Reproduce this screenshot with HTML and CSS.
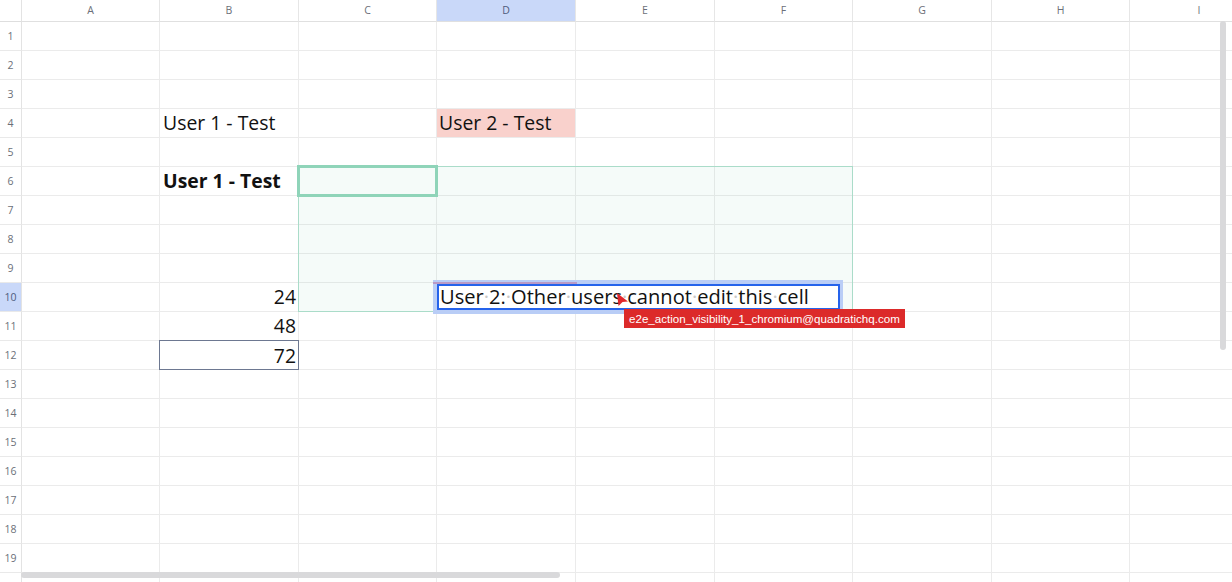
FILE: index.html
```html
<!DOCTYPE html>
<html>
<head>
<meta charset="utf-8">
<link rel="stylesheet" href="styles.css">
</head>
<body>
<div class="sheet">
  <div class="grid">
    <div class="corner"></div>
    <div class="ch">A</div><div class="ch">B</div><div class="ch">C</div><div class="ch sel">D</div><div class="ch">E</div><div class="ch">F</div><div class="ch">G</div><div class="ch">H</div><div class="ch">I</div>

    <div class="rh">1</div><div class="c"></div><div class="c"></div><div class="c"></div><div class="c"></div><div class="c"></div><div class="c"></div><div class="c"></div><div class="c"></div><div class="c"></div>
    <div class="rh">2</div><div class="c"></div><div class="c"></div><div class="c"></div><div class="c"></div><div class="c"></div><div class="c"></div><div class="c"></div><div class="c"></div><div class="c"></div>
    <div class="rh">3</div><div class="c"></div><div class="c"></div><div class="c"></div><div class="c"></div><div class="c"></div><div class="c"></div><div class="c"></div><div class="c"></div><div class="c"></div>
    <div class="rh">4</div><div class="c"></div><div class="c">User 1 - Test</div><div class="c"></div><div class="c pink">User 2 - Test</div><div class="c"></div><div class="c"></div><div class="c"></div><div class="c"></div><div class="c"></div>
    <div class="rh">5</div><div class="c"></div><div class="c"></div><div class="c"></div><div class="c"></div><div class="c"></div><div class="c"></div><div class="c"></div><div class="c"></div><div class="c"></div>
    <div class="rh">6</div><div class="c"></div><div class="c bold">User 1 - Test</div><div class="c"></div><div class="c"></div><div class="c"></div><div class="c"></div><div class="c"></div><div class="c"></div><div class="c"></div>
    <div class="rh">7</div><div class="c"></div><div class="c"></div><div class="c"></div><div class="c"></div><div class="c"></div><div class="c"></div><div class="c"></div><div class="c"></div><div class="c"></div>
    <div class="rh">8</div><div class="c"></div><div class="c"></div><div class="c"></div><div class="c"></div><div class="c"></div><div class="c"></div><div class="c"></div><div class="c"></div><div class="c"></div>
    <div class="rh">9</div><div class="c"></div><div class="c"></div><div class="c"></div><div class="c"></div><div class="c"></div><div class="c"></div><div class="c"></div><div class="c"></div><div class="c"></div>
    <div class="rh sel">10</div><div class="c"></div><div class="c num">24</div><div class="c"></div><div class="c"></div><div class="c"></div><div class="c"></div><div class="c"></div><div class="c"></div><div class="c"></div>
    <div class="rh">11</div><div class="c"></div><div class="c num">48</div><div class="c"></div><div class="c"></div><div class="c"></div><div class="c"></div><div class="c"></div><div class="c"></div><div class="c"></div>
    <div class="rh">12</div><div class="c"></div><div class="c num boxed">72</div><div class="c"></div><div class="c"></div><div class="c"></div><div class="c"></div><div class="c"></div><div class="c"></div><div class="c"></div>
    <div class="rh">13</div><div class="c"></div><div class="c"></div><div class="c"></div><div class="c"></div><div class="c"></div><div class="c"></div><div class="c"></div><div class="c"></div><div class="c"></div>
    <div class="rh">14</div><div class="c"></div><div class="c"></div><div class="c"></div><div class="c"></div><div class="c"></div><div class="c"></div><div class="c"></div><div class="c"></div><div class="c"></div>
    <div class="rh">15</div><div class="c"></div><div class="c"></div><div class="c"></div><div class="c"></div><div class="c"></div><div class="c"></div><div class="c"></div><div class="c"></div><div class="c"></div>
    <div class="rh">16</div><div class="c"></div><div class="c"></div><div class="c"></div><div class="c"></div><div class="c"></div><div class="c"></div><div class="c"></div><div class="c"></div><div class="c"></div>
    <div class="rh">17</div><div class="c"></div><div class="c"></div><div class="c"></div><div class="c"></div><div class="c"></div><div class="c"></div><div class="c"></div><div class="c"></div><div class="c"></div>
    <div class="rh">18</div><div class="c"></div><div class="c"></div><div class="c"></div><div class="c"></div><div class="c"></div><div class="c"></div><div class="c"></div><div class="c"></div><div class="c"></div>
    <div class="rh">19</div><div class="c"></div><div class="c"></div><div class="c"></div><div class="c"></div><div class="c"></div><div class="c"></div><div class="c"></div><div class="c"></div><div class="c"></div>
    <div class="rh"></div><div class="c"></div><div class="c"></div><div class="c"></div><div class="c"></div><div class="c"></div><div class="c"></div><div class="c"></div><div class="c"></div><div class="c"></div>
  </div>

  <div class="range"></div>
  <div class="cursor-green"></div>

  <div class="editor-halo"></div>
  <div class="peer-line"></div>
  <div class="editor">User<span class="ws">·</span>2:<span class="ws">·</span>Other<span class="ws">·</span>users<span class="ws">·</span>cannot<span class="ws">·</span>edit<span class="ws">·</span>this<span class="ws">·</span>cell</div>

  <svg class="pointer" width="13" height="15" viewBox="0 0 13 15"><path d="M1 1 L12 9.5 L6.5 10 L2.5 14 Z" fill="#e0262b"/></svg>
  <div class="tag">e2e_action_visibility_1_chromium@quadratichq.com</div>

  <div class="vscroll"></div>
  <div class="hscroll"></div>
</div>
</body>
</html>
```

FILE: styles.css
```css
html, body {
  margin: 0;
  padding: 0;
  background: #ffffff;
}

.sheet {
  position: relative;
  width: 1232px;
  height: 582px;
  overflow: hidden;
  background: #ffffff;
}

.grid {
  display: grid;
  grid-template-columns: 22px 138px 139px 138px 139px 139px 138px 139px 138px 139px;
  grid-template-rows: 22px repeat(20, 29px);
  font-family: "Open Sans", sans-serif;
}

.corner {
  box-sizing: border-box;
  border-right: 1px solid #e3e3e3;
  border-bottom: 1px solid #dedede;
}

.ch {
  box-sizing: border-box;
  border-right: 1px solid #e6e6e6;
  border-bottom: 1px solid #e0e0e0;
  font-size: 10.5px;
  color: #6b6f78;
  text-align: center;
  line-height: 21px;
}

.ch.sel {
  background: #c9d8f9;
  color: #4f5c7c;
}

.rh {
  box-sizing: border-box;
  border-right: 1px solid #e3e3e3;
  border-bottom: 1px solid #e9e9e9;
  font-size: 10.5px;
  color: #6b6f78;
  text-align: center;
  line-height: 28px;
}

.rh.sel {
  background: #c9d8f9;
  color: #4f5c7c;
}

.c {
  box-sizing: border-box;
  border-right: 1px solid #ebebeb;
  border-bottom: 1px solid #ebebeb;
  font-size: 19.4px;
  line-height: 27px;
  color: #111111;
  padding: 0 2px 0 3px;
  white-space: nowrap;
  overflow: visible;
}

.c.pink {
  background: #f9d1cc;
  padding-left: 2px;
}

.c.bold {
  font-weight: 700;
}

.c.num {
  text-align: right;
}

.c.boxed {
  border: 1px solid #6d7891;
  margin: -1px 0 0 -1px;
  width: calc(100% + 1px);
  height: 30px;
  line-height: 29px;
}

.range {
  position: absolute;
  left: 298px;
  top: 166px;
  width: 555px;
  height: 146px;
  box-sizing: border-box;
  border: 1px solid #aadcc9;
  background: rgba(120, 200, 170, 0.07);
}

.cursor-green {
  position: absolute;
  left: 297px;
  top: 165px;
  width: 141px;
  height: 32px;
  box-sizing: border-box;
  border: 3px solid #8fd4b9;
}

.editor-halo {
  position: absolute;
  left: 433px;
  top: 280px;
  width: 410px;
  height: 34px;
  background: #b9cdf6;
}

.peer-line {
  position: absolute;
  left: 433px;
  top: 282px;
  width: 144px;
  height: 2px;
  background: #b99ac6;
}

.editor {
  position: absolute;
  left: 437px;
  top: 284px;
  width: 403px;
  height: 26px;
  box-sizing: border-box;
  border: 2px solid #2563eb;
  background: #ffffff;
  font-family: "Open Sans", sans-serif;
  font-size: 20.1px;
  line-height: 22px;
  color: #111111;
  padding-left: 1px;
  white-space: nowrap;
  overflow: hidden;
}

.ws {
  color: #c9c9c9;
}

.pointer {
  position: absolute;
  left: 616px;
  top: 292px;
}

.tag {
  position: absolute;
  left: 624px;
  top: 309px;
  height: 19px;
  padding: 0 5px 0 5px;
  background: #dc2a2a;
  color: #ffffff;
  font-family: "Liberation Sans", Arial, sans-serif;
  font-size: 11.6px;
  line-height: 19px;
  white-space: nowrap;
}

.vscroll {
  position: absolute;
  left: 1220px;
  top: 21px;
  width: 6px;
  height: 329px;
  border-radius: 3px;
  background: #d9d9db;
}

.hscroll {
  position: absolute;
  left: 21px;
  top: 572px;
  width: 539px;
  height: 6px;
  border-radius: 3px;
  background: #d9d9db;
}
```
